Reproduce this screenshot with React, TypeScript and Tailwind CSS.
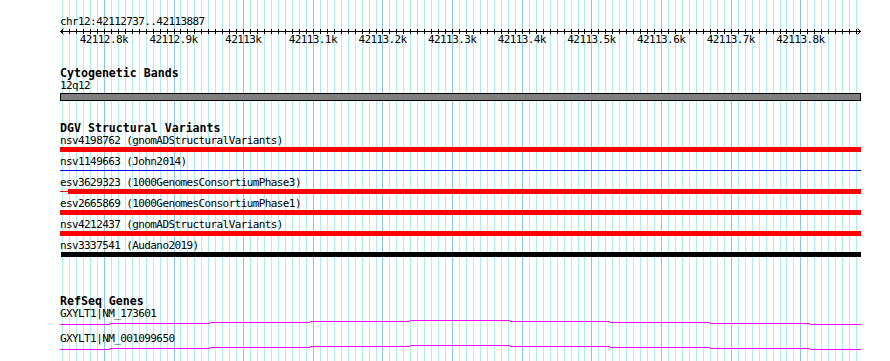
import React from "react";

const START = 42112737;
const END = 42113887;
const X0 = 60;
const TRACK_W = 801;
const scale = TRACK_W / (END - START);
const px = (bp: number) => X0 + (bp - START) * scale;

const tickBps: number[] = [];
for (let bp = 42112740; bp <= END; bp += 10) tickBps.push(bp);
const majorBps = tickBps.filter((bp) => bp % 100 === 0);

const fmtK = (bp: number) => `${(bp / 1000).toFixed(bp % 1000 === 0 ? 0 : 1)}k`;

const variants = [
  { label: "nsv4198762 (gnomADStructuralVariants)", kind: "red" },
  { label: "nsv1149663 (John2014)", kind: "blue" },
  { label: "esv3629323 (1000GenomesConsortiumPhase3)", kind: "redPartial" },
  { label: "esv2665869 (1000GenomesConsortiumPhase1)", kind: "red" },
  { label: "nsv4212437 (gnomADStructuralVariants)", kind: "red" },
  { label: "nsv3337541 (Audano2019)", kind: "black" },
] as const;

const genes = ["GXYLT1|NM_173601", "GXYLT1|NM_001099650"];

// stepped transcript line: width of each piece and its offset from the top
const geneSteps = [
  { w: 50, y: 5 },
  { w: 100, y: 4 },
  { w: 100, y: 3 },
  { w: 100, y: 2 },
  { w: 100, y: 1 },
  { w: 100, y: 2 },
  { w: 100, y: 3 },
  { w: 100, y: 4 },
  { w: 51, y: 5 },
];

function Grid() {
  return (
    <svg className="pointer-events-none absolute inset-0" width={890} height={361}>
      {tickBps.map((bp) => (
        <rect
          key={bp}
          x={Math.round(px(bp))}
          y={0}
          width={1}
          height={361}
          fill={bp % 100 === 0 ? "#88c6ee" : "#aeeeee"}
        />
      ))}
    </svg>
  );
}

function Ruler() {
  return (
    <svg width={TRACK_W} height={21} className="block overflow-visible">
      <rect x={0} y={4} width={TRACK_W} height={1} fill="#000" />
      {tickBps.map((bp) => (
        <rect key={bp} x={Math.round(px(bp)) - X0} y={2} width={1} height={5} fill="#000" />
      ))}
      <path d="M3.5 1.5 L0.5 4.5 L3.5 7.5" stroke="#000" fill="none" />
      <path d="M797.5 1.5 L800.5 4.5 L797.5 7.5" stroke="#000" fill="none" />
      {majorBps.map((bp) => (
        <text
          key={bp}
          x={px(bp) - X0}
          y={16}
          textAnchor="middle"
          fontSize={11}
          letterSpacing={-0.6}
          fontFamily="DejaVu Sans Mono, monospace"
          fill="#000"
        >
          {fmtK(bp)}
        </text>
      ))}
    </svg>
  );
}

function VariantBar({ kind }: { kind: string }) {
  if (kind === "blue")
    return (
      <div className="mt-px flex h-[5px] items-center">
        <div className="h-px w-full bg-[#0000ff]" />
      </div>
    );
  if (kind === "redPartial")
    return (
      <div className="mt-px flex h-[5px] items-center">
        <div className="h-px w-[8px] bg-[#ff0000]" />
        <div className="h-full flex-1 bg-[#ff0000]" />
      </div>
    );
  if (kind === "black") return <div className="mt-px ml-px h-[5px] bg-black" />;
  return <div className="mt-px h-[5px] bg-[#ff0000]" />;
}

function GeneLine() {
  return (
    <div className="flex h-[6px] items-start">
      {geneSteps.map((s, i) => (
        <div
          key={i}
          className="h-px shrink-0 bg-[#ff00ff]"
          style={{ width: s.w, marginTop: s.y }}
        />
      ))}
    </div>
  );
}

export default function App() {
  return (
    <div className="relative h-[361px] w-[890px] overflow-hidden bg-white font-['DejaVu_Sans_Mono',monospace] text-[11px] tracking-[-0.6px] text-black">
      <Grid />
      <div className="relative flex w-[861px] flex-col pl-[60px]">
        <div className="mt-[16px] h-[11px] leading-[11px] whitespace-pre">chr12:42112737..42113887</div>
        <Ruler />

        <div className="mt-[19px] h-[12px] text-[11.6px] leading-[12px] font-bold tracking-normal">Cytogenetic Bands</div>
        <div className="mt-px h-[11px] leading-[11px]">12q12</div>
        <div className="mt-[2px] h-[8px] border border-black bg-[#808080]" />

        <div className="mt-[21px] h-[12px] text-[11.6px] leading-[12px] font-bold tracking-normal">DGV Structural Variants</div>
        <div className="mt-px flex flex-col">
          {variants.map((v) => (
            <div key={v.label} className="h-[21px]">
              <div className="h-[11px] leading-[11px] whitespace-pre">{v.label}</div>
              <VariantBar kind={v.kind} />
            </div>
          ))}
        </div>

        <div className="mt-[34px] h-[12px] text-[11.6px] leading-[12px] font-bold tracking-normal">RefSeq Genes</div>
        <div className="mt-px flex flex-col">
          {genes.map((g) => (
            <div key={g} className="h-[25px]">
              <div className="h-[11px] leading-[11px] whitespace-pre">{g}</div>
              <GeneLine />
            </div>
          ))}
        </div>
      </div>
    </div>
  );
}
